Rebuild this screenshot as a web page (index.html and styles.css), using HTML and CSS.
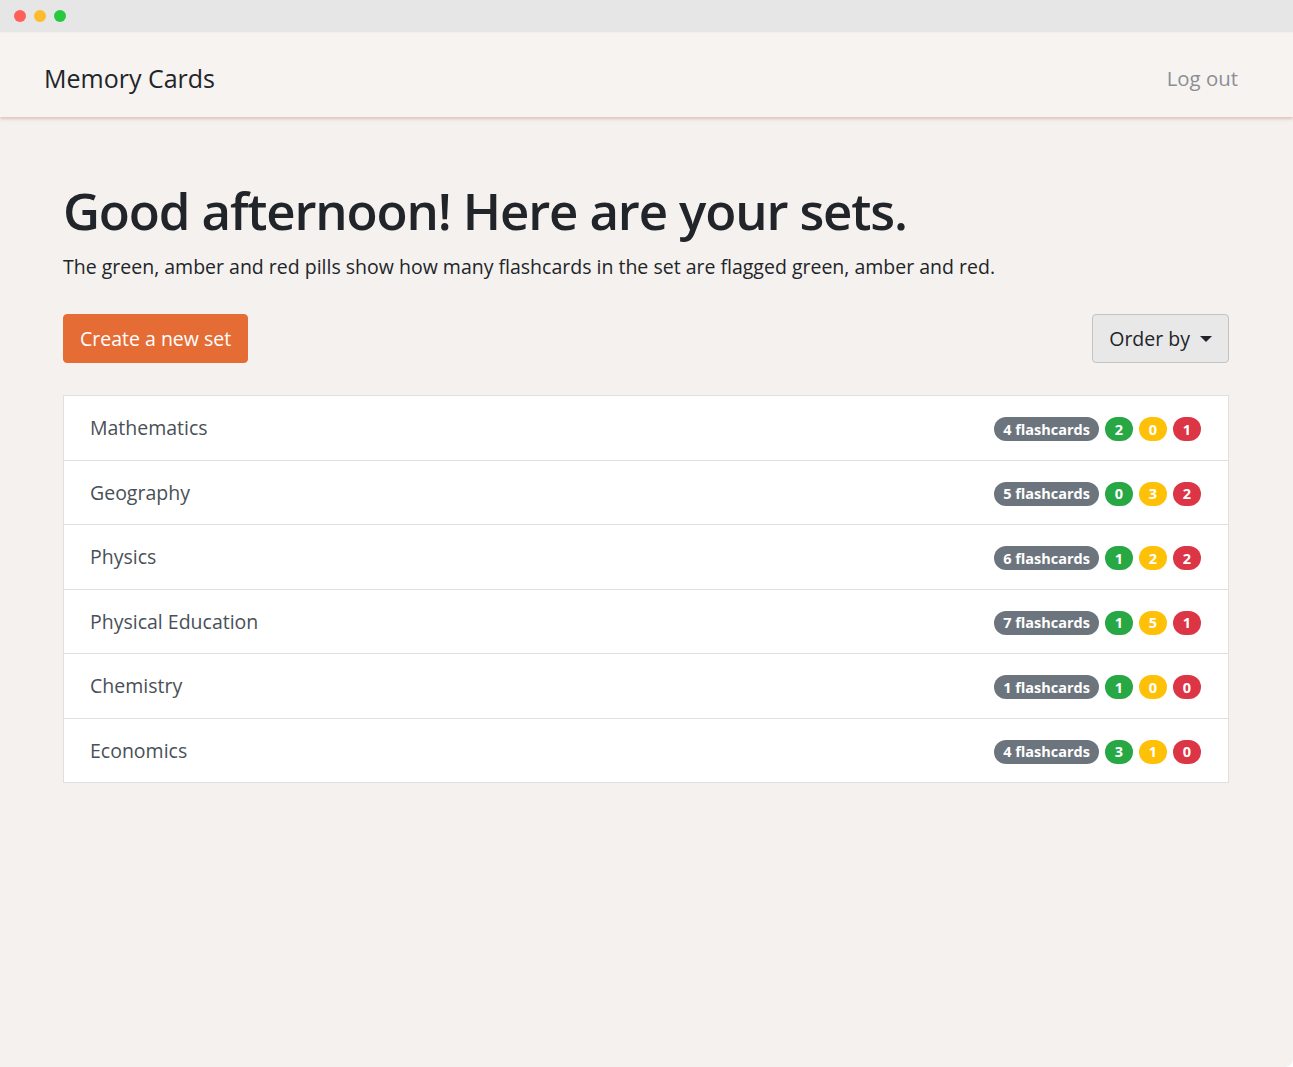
FILE: index.html
```html
<!DOCTYPE html>
<html lang="en">
<head>
<meta charset="utf-8">
<title>Memory Cards</title>
<link rel="stylesheet" href="styles.css">
</head>
<body>
<div class="window">
  <div class="titlebar">
    <span class="dot dot-red"></span>
    <span class="dot dot-yellow"></span>
    <span class="dot dot-green"></span>
  </div>
  <nav class="navbar">
    <a class="brand" href="#">Memory Cards</a>
    <a class="logout" href="#">Log out</a>
  </nav>
  <main class="container">
    <h1 class="title">Good afternoon! Here are your sets.</h1>
    <p class="lead">The green, amber and red pills show how many flashcards in the set are flagged green, amber and red.</p>
    <div class="toolbar">
      <button class="btn btn-create">Create a new set</button>
      <button class="btn btn-order">Order by <span class="caret"></span></button>
    </div>
    <ul class="sets">
      <li class="set"><span class="set-name">Mathematics</span><span class="pills"><span class="pill pill-gray">4 flashcards</span><span class="pill pill-green">2</span><span class="pill pill-amber">0</span><span class="pill pill-red">1</span></span></li>
      <li class="set"><span class="set-name">Geography</span><span class="pills"><span class="pill pill-gray">5 flashcards</span><span class="pill pill-green">0</span><span class="pill pill-amber">3</span><span class="pill pill-red">2</span></span></li>
      <li class="set"><span class="set-name">Physics</span><span class="pills"><span class="pill pill-gray">6 flashcards</span><span class="pill pill-green">1</span><span class="pill pill-amber">2</span><span class="pill pill-red">2</span></span></li>
      <li class="set"><span class="set-name">Physical Education</span><span class="pills"><span class="pill pill-gray">7 flashcards</span><span class="pill pill-green">1</span><span class="pill pill-amber">5</span><span class="pill pill-red">1</span></span></li>
      <li class="set"><span class="set-name">Chemistry</span><span class="pills"><span class="pill pill-gray">1 flashcards</span><span class="pill pill-green">1</span><span class="pill pill-amber">0</span><span class="pill pill-red">0</span></span></li>
      <li class="set"><span class="set-name">Economics</span><span class="pills"><span class="pill pill-gray">4 flashcards</span><span class="pill pill-green">3</span><span class="pill pill-amber">1</span><span class="pill pill-red">0</span></span></li>
    </ul>
  </main>
</div>
</body>
</html>
```

FILE: styles.css
```css
html, body {
  margin: 0;
  padding: 0;
  background: #ffffff;
}
body {
  font-family: "Open Sans", "Noto Sans", sans-serif;
  color: #212529;
}
.window {
  height: 1067px;
  background: #f5f1ee;
  border-bottom-right-radius: 8px;
  overflow: hidden;
}
.titlebar {
  height: 32px;
  background: #e6e6e6;
  display: flex;
  align-items: center;
  gap: 8px;
  padding-left: 14px;
  box-sizing: border-box;
}
.dot {
  width: 12px;
  height: 12px;
  border-radius: 50%;
  display: block;
}
.dot-red { background: #fe5f57; }
.dot-yellow { background: #febb2e; }
.dot-green { background: #28c840; }
.navbar {
  height: 84px;
  margin-top: 1px;
  background: #f7f3f0;
  display: flex;
  align-items: center;
  justify-content: space-between;
  padding: 0 55px 0 44px;
  box-shadow: 0 2px 3px rgba(190, 140, 110, 0.45);
  position: relative;
}
.brand {
  font-size: 25px;
  font-weight: 500;
  color: #212529;
  text-decoration: none;
  padding-top: 5px;
}
.logout {
  font-size: 20.4px;
  color: #8c8e94;
  text-decoration: none;
  padding-top: 6px;
}
.container {
  padding: 63px 64px 0 63px;
}
.title {
  margin: 0;
  font-size: 51px;
  font-weight: 600;
  letter-spacing: -1.15px;
  line-height: 1.2;
  color: #212529;
}
.lead {
  margin: 12px 0 0;
  font-size: 19.5px;
  color: #212529;
}
.toolbar {
  display: flex;
  justify-content: space-between;
  margin-top: 34px;
}
.btn {
  font-family: inherit;
  height: 49px;
  border-radius: 4px;
  font-size: 19.5px;
  padding: 0 16px;
  box-sizing: border-box;
}
.btn-create {
  background: #e56d35;
  border: 1px solid #e56d35;
  color: #ffffff;
}
.btn-order {
  background: #e8e8e8;
  border: 1px solid #c3c3c3;
  color: #212529;
  display: flex;
  align-items: center;
  gap: 10px;
}
.caret {
  width: 0;
  height: 0;
  border-left: 6px solid transparent;
  border-right: 6px solid transparent;
  border-top: 6px solid #212529;
}
.sets {
  list-style: none;
  margin: 32px 0 0;
  padding: 0;
  background: #ffffff;
  border: 1px solid #dfdfdf;
}
.set {
  height: 63.5px;
  display: flex;
  align-items: center;
  justify-content: space-between;
  padding: 0 27px 0 26px;
  border-top: 1px solid #dfdfdf;
}
.set:first-child {
  border-top: none;
}
.set-name {
  font-size: 19.5px;
  color: #495057;
}
.pills {
  display: flex;
  gap: 6px;
  margin-top: 3px;
}
.pill {
  height: 24px;
  min-width: 28px;
  box-sizing: border-box;
  border-radius: 12px;
  color: #ffffff;
  font-weight: 700;
  font-size: 14.5px;
  display: flex;
  align-items: center;
  justify-content: center;
  padding: 0 9px;
}
.pill-gray { background: #6c757d; }
.pill-green { background: #28a745; }
.pill-amber { background: #ffc107; }
.pill-red { background: #dc3545; }
```
